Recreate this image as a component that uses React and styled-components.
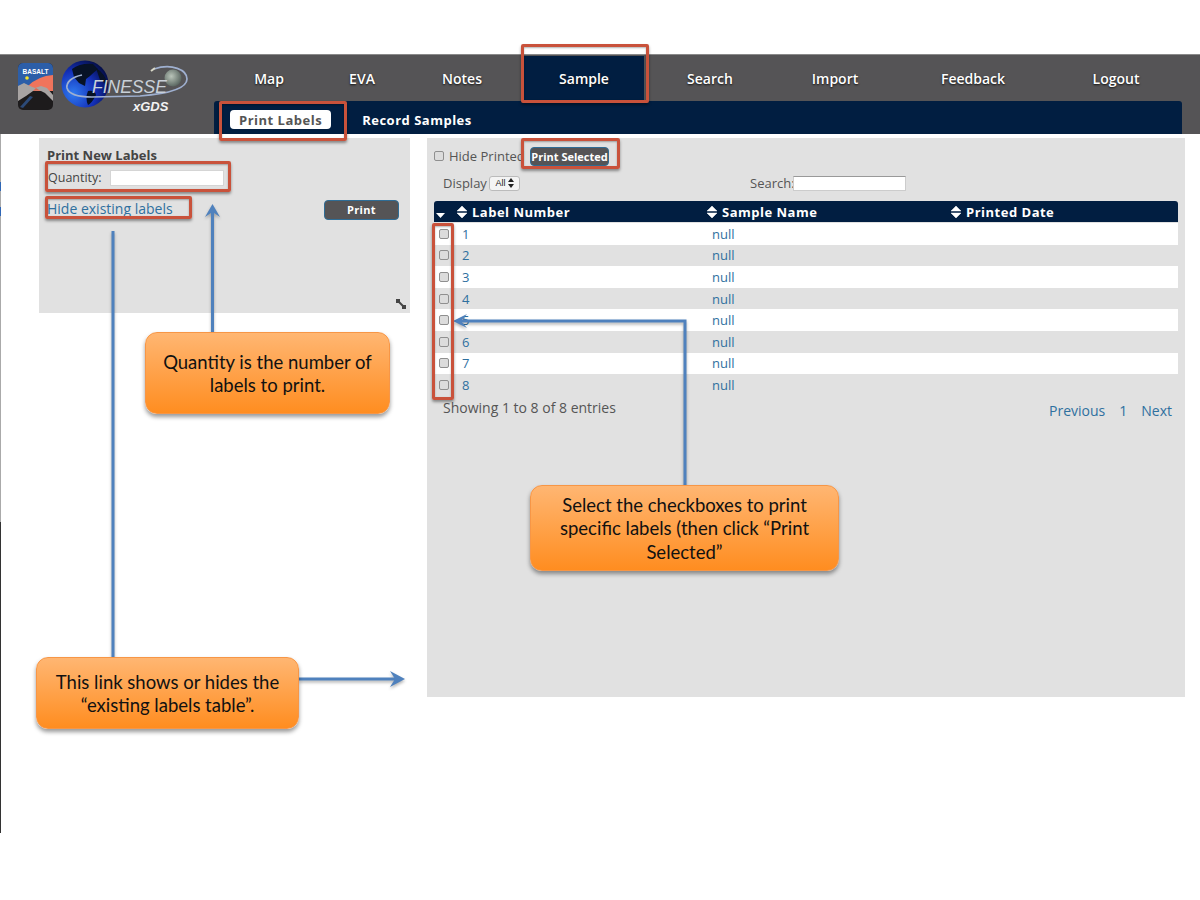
import styled, { createGlobalStyle } from "styled-components";

const GlobalStyle = createGlobalStyle`
  html, body {
    margin: 0;
    padding: 0;
    background: #fff;
    font-family: "Open Sans", sans-serif;
  }
`;

const Page = styled.div`
  position: relative;
  width: 1200px;
  height: 900px;
  overflow: hidden;
  padding-top: 54px;
  box-sizing: border-box;
`;
const Slide = styled.div`
  height: 779px;
  padding-left: 1px;
  box-sizing: border-box;
  background: linear-gradient(
      #aaa 128px,
      #2f66b5 128px 137px,
      #aaa 137px 153px,
      #2f66b5 153px 162px,
      #aaa 162px 468px,
      #333 468px
    )
    left top / 1px 100% no-repeat;
`;
const Header = styled.header`
  display: flex;
  height: 80px;
  margin-left: -1px;
  background: #555456;
  border-top: 1px solid #8a8a8a;
  box-sizing: border-box;
`;
const LogoBox = styled.div`
  width: 214px;
  flex: none;
`;
const NavColumn = styled.div`
  width: 968px;
  display: flex;
  flex-direction: column;
`;
const Nav = styled.nav`
  display: flex;
  height: 46px;
  padding-top: 1px;
  box-sizing: border-box;
`;
const NavItem = styled.a`
  width: ${(p) => p.$w}px;
  display: flex;
  align-items: center;
  justify-content: center;
  box-sizing: border-box;
  color: #fff;
  font-size: 14px;
  font-weight: 600;
  text-shadow: 0 1px 2px #111;
  background: ${(p) => (p.$active ? "#011e41" : "transparent")};
`;
const SubNav = styled.div`
  flex: 1;
  display: flex;
  align-items: center;
  gap: 31px;
  padding: 4px 0 0 16px;
  box-sizing: border-box;
  background: #011e41;
  border-radius: 3px 3px 0 0;
`;
const SubItem = styled.a`
  height: 19px;
  display: flex;
  align-items: center;
  padding: 0 ${(p) => (p.$active ? "9px" : "0")};
  border-radius: 4px;
  background: ${(p) => (p.$active ? "#fff" : "transparent")};
  color: ${(p) => (p.$active ? "#555" : "#fff")};
  font-size: 13px;
  font-weight: 700;
  letter-spacing: 0.5px;
`;
const Content = styled.div`
  display: flex;
  align-items: flex-start;
  padding: 4px 14px 0 38px;
  gap: 17px;
`;
const LeftPanel = styled.section`
  position: relative;
  width: 371px;
  height: 175px;
  padding: 10px 11px 0 8px;
  box-sizing: border-box;
  flex: none;
  background: #e1e1e1;
  color: #444;
`;
const PanelTitle = styled.h3`
  margin: 0;
  font-size: 13px;
  line-height: 15px;
  font-weight: 700;
`;
const QuantityRow = styled.div`
  display: flex;
  align-items: center;
  gap: 8px;
  margin: 6px 0 0 1px;
  font-size: 12.5px;
  height: 18px;
`;
const QuantityLabel = styled.span`
  margin-top: -2px;
`;
const QuantityInput = styled.input`
  width: 114px;
  height: 16px;
  padding: 0;
  box-sizing: border-box;
  border: 1px solid #d5d5d5;
  background: #fff;
`;
const ActionRow = styled.div`
  display: flex;
  justify-content: space-between;
  align-items: center;
  margin-top: 12px;
`;
const Link = styled.a`
  color: #2f709f;
  font-size: 14px;
`;
const ExistingLink = styled(Link)`
  margin-bottom: 2px;
`;
const DarkButton = styled.button`
  width: ${(p) => p.$w}px;
  height: ${(p) => p.$h}px;
  padding: 0;
  flex: none;
  background: #555456;
  border: 1px solid #2f6d96;
  border-radius: 4px;
  color: #fff;
  font-family: "Open Sans", sans-serif;
  font-size: 11px;
  font-weight: 700;
  letter-spacing: ${(p) => p.$spacing || 0}px;
  white-space: nowrap;
`;
const ResizeIcon = styled.svg`
  position: absolute;
  right: 3px;
  bottom: 3px;
`;
const RightPanel = styled.section`
  width: 758px;
  height: 559px;
  padding: 8px 7px 0 7px;
  box-sizing: border-box;
  background: #e1e1e1;
  color: #555;
`;
const HideRow = styled.div`
  display: flex;
  align-items: center;
  height: 20px;
  font-size: 13px;
`;
const HideLabel = styled.span`
  width: 72px;
  white-space: nowrap;
  margin: 0 9px 0 5px;
`;
const Check = styled.input.attrs({ type: "checkbox" })`
  appearance: none;
  width: 10px;
  height: 10px;
  margin: 0;
  flex: none;
  border: 1px solid #8f8f8f;
  border-radius: 2px;
  background: #dcdcdc;
  box-sizing: border-box;
`;
const ControlsRow = styled.div`
  display: flex;
  align-items: center;
  height: 16px;
  margin: 9px 0 10px 9px;
  font-size: 13px;
`;
const DisplayText = styled.span`
  width: 46px;
`;
const FakeSelect = styled.div`
  width: 31px;
  height: 15px;
  display: flex;
  align-items: center;
  justify-content: center;
  gap: 2px;
  box-sizing: border-box;
  background: #f4f4f4;
  border: 1px solid #bbb;
  border-radius: 3px;
  color: #222;
  font-family: "Liberation Sans", sans-serif;
  font-size: 9px;
`;
const SearchLabel = styled.span`
  margin: 0 -2px 0 230px;
`;
const SearchInput = styled.input`
  width: 113px;
  height: 15px;
  padding: 0;
  box-sizing: border-box;
  background: #fff;
  border: 1px solid #ccc;
  border-top-color: #999;
`;
const Row = styled.div`
  display: grid;
  grid-template-columns: 22px 250px 244px 1fr;
  align-items: center;
  height: ${(p) => p.$h || 21.6}px;
  background: ${(p) => p.$bg || "transparent"};
`;
const HeadRow = styled(Row)`
  margin-bottom: 1px;
  background: #011e41;
  border-radius: 3px 3px 0 0;
`;
const HeadCell = styled.div`
  display: flex;
  align-items: center;
  gap: 5px;
  padding-left: 1px;
  color: #fff;
  font-size: 13px;
  font-weight: 700;
  letter-spacing: 0.5px;
`;
const CheckCell = styled.div`
  display: flex;
  padding-left: 5px;
`;
const SortCaret = styled.svg`
  margin: 8px 0 0 -3px;
`;
const Cell = styled.div`
  padding-left: 6px;
  color: #2f709f;
  font-size: 13px;
`;
const FooterRow = styled.div`
  display: flex;
  justify-content: space-between;
  margin-top: 2px;
  padding: 0 6px 0 9px;
`;
const Showing = styled.div`
  font-size: 14px;
  line-height: 20px;
`;
const Pager = styled.div`
  display: flex;
  gap: 14px;
  padding-top: 3px;
  line-height: 20px;
`;
const Overlay = styled.svg`
  position: absolute;
  inset: 0;
  pointer-events: none;
  filter: drop-shadow(0 2px 1.5px rgba(0, 0, 0, 0.3));
`;
const RedBox = styled.div`
  position: absolute;
  left: ${(p) => p.$x}px;
  top: ${(p) => p.$y}px;
  width: ${(p) => p.$w}px;
  height: ${(p) => p.$h}px;
  box-sizing: border-box;
  border: 3px solid #c9523b;
  border-radius: 2px;
  box-shadow: 0 2px 3px rgba(0, 0, 0, 0.4), inset 0 1px 2px rgba(0, 0, 0, 0.3);
`;
const Callout = styled.div`
  position: absolute;
  left: ${(p) => p.$x}px;
  top: ${(p) => p.$y}px;
  width: ${(p) => p.$w}px;
  height: ${(p) => p.$h}px;
  display: flex;
  align-items: center;
  justify-content: center;
  padding: 2px 14px 0;
  box-sizing: border-box;
  text-align: center;
  font-family: Lato, sans-serif;
  font-size: 18.5px;
  line-height: 23.5px;
  color: #111;
  background: linear-gradient(#ffb672, #ff8d20);
  border: 1px solid #f79646;
  border-radius: 12px;
  box-shadow: 0 3px 4px rgba(0, 0, 0, 0.4);
`;

const navItems = [
  ["Map", 110],
  ["EVA", 76],
  ["Notes", 124],
  ["Sample", 120, true],
  ["Search", 132],
  ["Import", 118],
  ["Feedback", 158],
  ["Logout", 128],
];
const rows = [1, 2, 3, 4, 5, 6, 7, 8];

const SortIcon = () => (
  <svg width="10" height="12" viewBox="0 0 10 12">
    <path d="M5 0 L10 5 H0 Z M0 7 H10 L5 12 Z" fill="#fff" stroke="#fff" strokeWidth="0.5" strokeLinejoin="round" />
  </svg>
);

const Logo = () => (
  <svg width="214" height="80" viewBox="0 0 214 80">
    <defs>
      <radialGradient id="globe" cx="0.25" cy="0.7" r="0.85">
        <stop offset="0" stopColor="#2f7af0" />
        <stop offset="0.55" stopColor="#1430b8" />
        <stop offset="1" stopColor="#020a3c" />
      </radialGradient>
      <radialGradient id="moon" cx="0.4" cy="0.4" r="0.7">
        <stop offset="0" stopColor="#b9c4b9" />
        <stop offset="1" stopColor="#4d5a55" />
      </radialGradient>
    </defs>
    <rect x="18" y="8" width="35" height="47" rx="5" fill="#1d1b1c" />
    <path d="M18 13 a5 5 0 0 1 5 -5 h25 a5 5 0 0 1 5 5 v20 h-35 Z" fill="#2c5ea8" />
    <text x="35.5" y="18.5" textAnchor="middle" fontFamily="Liberation Sans, sans-serif" fontSize="6.5" fontWeight="700" fill="#fff">BASALT</text>
    <circle cx="27" cy="23" r="1.8" fill="#f6e32a" />
    <path d="M28 31 Q38 21 53 20 V36 H30 Z" fill="#f0745c" />
    <path d="M18 31 L24 28 L30 31 L35 33 L41 31 L47 33 L53 40 V46 L45 38 L39 35 L33 36 L26 41 L18 46 Z" fill="#a8a4a3" />
    <path d="M33 36 L36 33 L39 35 Z" fill="#e2674f" />
    <path d="M20 52 L30 41 L33 42 L23 53 Z" fill="#2c4a78" />
    <circle cx="85" cy="29" r="23.5" fill="url(#globe)" />
    <path d="M72 14 Q80 8 93 9 L98 14 Q93 18 90 21 L86 24 L85 31 L79 28 L74 22 Z" fill="#071226" />
    <path d="M96 13 Q105 18 108 30 L100 25 Z M88 36 Q95 35 96 40 Q92 48 88 50 Q85 43 88 36 Z" fill="#071226" />
    <path d="M82 20 C72 22 66 27 67 33 C69 40 78 42 92 42 L140 41 C165 39 187 34 187 24 C187 15 172 8 154 14" fill="none" stroke="#9fb0d0" strokeWidth="1.7" />
    <circle cx="173" cy="23" r="8.5" fill="url(#moon)" />
    <path d="M151 16 L155 13" stroke="#d8d8c8" strokeWidth="2" />
    <text x="92" y="38" fontFamily="Liberation Sans, sans-serif" fontStyle="italic" fontSize="17.5" fill="#c9d0d8">FINESSE</text>
    <text x="133" y="55.5" fontFamily="Liberation Sans, sans-serif" fontStyle="italic" fontWeight="700" fontSize="13" fill="#f2f2f2">xGDS</text>
  </svg>
);

const Arrows = () => (
  <Overlay width="1200" height="900" viewBox="0 0 1200 900">
    <g fill="none" stroke="#4f81bd" strokeWidth="3">
      <path d="M113 231 V657" />
      <path d="M212.5 332 V212" />
      <path d="M685 485 V321 H460" />
      <path d="M299 679 H398" />
    </g>
    <g fill="#4f81bd">
      <path d="M205 217 L212.5 204 L220 217 L212.5 212 Z" />
      <path d="M467 314 L453 321 L467 328 L461 321 Z" />
      <path d="M390 671 L405 679 L390 687 L395 679 Z" />
    </g>
  </Overlay>
);

const App = () => {
  return (
    <Page>
      <GlobalStyle />
      <Slide>
        <Header>
          <LogoBox>
            <Logo />
          </LogoBox>
          <NavColumn>
            <Nav>
              {navItems.map(([name, w, active]) => (
                <NavItem key={name} $w={w} $active={active}>{name}</NavItem>
              ))}
            </Nav>
            <SubNav>
              <SubItem $active>Print Labels</SubItem>
              <SubItem>Record Samples</SubItem>
            </SubNav>
          </NavColumn>
        </Header>
        <Content>
          <LeftPanel>
            <PanelTitle>Print New Labels</PanelTitle>
            <QuantityRow>
              <QuantityLabel>Quantity:</QuantityLabel>
              <QuantityInput />
            </QuantityRow>
            <ActionRow>
              <ExistingLink>Hide existing labels</ExistingLink>
              <DarkButton $w={75} $h={20} $spacing={0.3}>Print</DarkButton>
            </ActionRow>
            <ResizeIcon width="12" height="12" viewBox="0 0 12 12">
              <path d="M1 1 H5 V5 H1 Z M7 7 H11 V11 H7 Z" fill="#444" />
              <path d="M3 3 L9 9" stroke="#444" strokeWidth="2" />
            </ResizeIcon>
          </LeftPanel>
          <RightPanel>
            <HideRow>
              <Check />
              <HideLabel>Hide Printed</HideLabel>
              <DarkButton $w={79} $h={19}>Print Selected</DarkButton>
            </HideRow>
            <ControlsRow>
              <DisplayText>Display</DisplayText>
              <FakeSelect>
                All
                <svg width="6" height="10" viewBox="0 0 6 10">
                  <path d="M3 0 L6 4 H0 Z M0 6 H6 L3 10 Z" fill="#222" />
                </svg>
              </FakeSelect>
              <SearchLabel>Search:</SearchLabel>
              <SearchInput />
            </ControlsRow>
            <HeadRow $h={21}>
              <CheckCell>
                <SortCaret width="9" height="9" viewBox="0 0 9 9">
                  <path d="M0 2 H9 L4.5 7 Z" fill="#fff" />
                </SortCaret>
              </CheckCell>
              <HeadCell><SortIcon />Label Number</HeadCell>
              <HeadCell><SortIcon />Sample Name</HeadCell>
              <HeadCell><SortIcon />Printed Date</HeadCell>
            </HeadRow>
            {rows.map((n) => (
              <Row key={n} $bg={n % 2 ? "#fff" : "#e1e1e1"}>
                <CheckCell><Check /></CheckCell>
                <Cell>{n}</Cell>
                <Cell>null</Cell>
                <Cell />
              </Row>
            ))}
            <FooterRow>
              <Showing>Showing 1 to 8 of 8 entries</Showing>
              <Pager>
                <Link>Previous</Link>
                <Link>1</Link>
                <Link>Next</Link>
              </Pager>
            </FooterRow>
          </RightPanel>
        </Content>
      </Slide>

      <Arrows />
      <RedBox $x={521} $y={44} $w={128} $h={59} />
      <RedBox $x={219} $y={101} $w={128} $h={40} />
      <RedBox $x={45} $y={161} $w={186} $h={31} />
      <RedBox $x={45} $y={196} $w={147} $h={23} />
      <RedBox $x={521} $y={138} $w={99} $h={31} />
      <RedBox $x={432} $y={223} $w={22} $h={177} />
      <Callout $x={145} $y={332} $w={245} $h={82}>Quantity is the number of labels to print.</Callout>
      <Callout $x={530} $y={485} $w={309} $h={86}>Select the checkboxes to print specific labels (then click “Print Selected”</Callout>
      <Callout $x={36} $y={657} $w={263} $h={72}>This link shows or hides the “existing labels table”.</Callout>
    </Page>
  );
};

export default App;
